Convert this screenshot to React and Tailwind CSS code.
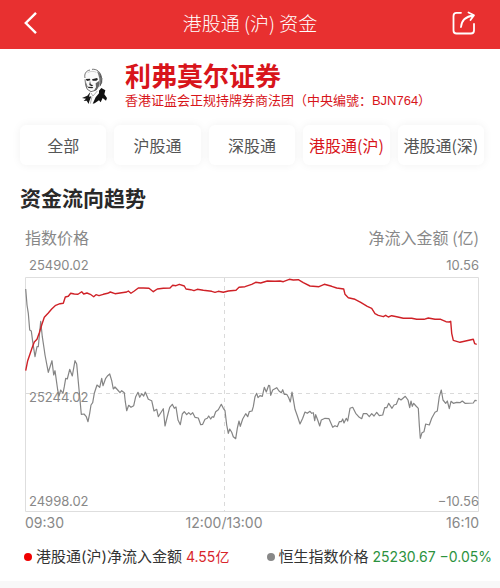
import React from "react";

const NET_INFLOW =
  "25.7,370.7 27.7,360.7 30,354 32.3,347.3 34.3,342 37,339.3 39.3,332.7 41.7,325 44.3,317.3 48.3,313 51.7,309 55.7,305.3 60,303.7 63.3,303.3 65.3,297 68.3,296.3 70.7,293.3 74.3,294 78,294.3 81.7,291.7 83.7,294 87,293 90.3,294.3 93.7,296.7 96,294.7 99,295.7 103.3,294.3 107.7,293.3 110.3,292 115,293.7 120,293 126.7,292 128.3,291 131,293.3 134.3,291 138.3,288 143.3,288 149,288.3 153.3,291.7 157.3,289 163.3,288.3 170,288 172.7,285.3 176,285.7 179.3,284.3 184.3,286 186,289 190.7,289.7 194,290.7 197.3,289.3 203.3,290.3 211.7,291.3 215,292.3 218.3,291.3 223.3,292.3 228.3,291 236,290.3 239,287.3 245,286.7 251.7,284.3 255.7,282.3 260.7,283 267.3,281 275,281.3 280,281 283.3,281.7 289.3,279.3 293.3,280 298.3,279.7 303.3,282.7 310,286 319,286.7 324.3,284.3 331.7,286.3 336.7,288 343.7,289 345,294.3 348.3,297.7 355,299.3 360.7,302.3 367.3,306.3 371.7,308.3 375,313.7 378.3,315.3 383.3,316.7 385.7,315.3 388.3,317 391.7,315.7 396.7,316.7 403.3,318.3 411.7,318.3 416.7,319.3 424,319.3 428.3,318 435,319.3 440.7,319.3 446,321.7 449.3,322 450.7,321.3 451.7,333.3 453.3,340.3 460,342.3 466.7,340.7 473.3,339.3 474.7,343.7 476.7,344.3";

const INDEX_PRICE =
  "25.7,289 27,305 28.3,313.3 29.7,330 31.3,331 32.7,341.7 35,356.7 37,346.7 38.3,346.7 40.7,321.3 42.3,336.7 44.3,350 45,355 48.3,372.3 52,360.7 53.7,375 55,370.7 57.7,390 59,396 60.7,390 63,393.3 64.3,386.7 65.7,378.3 67.3,379 69.7,369.3 72.3,376 75,360.7 76.7,364 78.3,381.7 80,400 81.3,414.3 84,414 86.3,416.7 88,421.7 89.7,413.3 91,405 92.7,402.7 94.3,393.3 97,385 99.7,387.3 101.7,378.3 103,385.7 105.7,378.3 107.7,375.7 109.7,374 111.7,380.7 113.3,389 115,387 117.7,390 120,392.7 121.7,390.7 124.3,392.7 125.3,401.7 126.7,410.7 128.7,405.3 131,407.3 133.7,405.7 135.7,396.7 138,392.3 139.7,397.3 141.7,393.7 143.7,396 145.3,392 148.3,399.3 151.7,400.7 154,411 156.7,409.3 158.3,416.7 163.3,408.7 165,426 167.7,415 169.7,407.3 172.3,404.3 174.3,408.3 176,407 178,420 180.3,424.7 182.3,414 184.3,411.7 186.7,414.7 188.7,412.7 190.7,414.7 192.7,412.7 195,417.3 198.3,418 200.7,424.7 202.7,424.3 205,419.3 207.3,418.3 208.7,416 210.7,419 212.3,416.7 213.7,417.3 215.7,411.7 218.3,409.7 221.3,404.3 223.3,408.3 225,410.7 226.7,425 228.3,433.3 229.7,429 231.7,432.3 233.3,436.7 235.7,438.7 237.3,428.3 239,421 240.3,426.3 242.7,419 245.7,413.7 247.7,416.7 249.3,411.7 252,411 253.3,406.7 255,396.7 256.7,393.3 258,397.7 260,395.7 262.3,396.3 264.3,387.3 266.3,392 268.7,385.3 269.7,385.7 270.7,395.3 272.7,390 276.7,387.7 279,391 281.3,392.7 282.7,389.7 284.3,394.3 286.7,394.3 288.7,397.7 290.3,402 292,392 293.7,401.7 295,409.3 297.3,415.7 300,424 302.7,418.3 305,412 307.3,413.3 310,411.3 311.7,413.3 313.3,412.7 314.7,420.7 315.7,414.7 317.7,420 319.7,426 321.3,420 325,418.3 329,418.7 332.7,427.3 335,425.7 337.3,426.7 339.3,421.7 341.3,421.7 342.7,419 344,423 346.3,418.3 347.7,421 350,408.3 352.7,407.3 355.7,413.3 359.3,417.3 361.7,418.7 363.3,413.7 366.7,413.7 369.3,416.7 371.7,413.7 374,416 376.7,412.3 379.3,415.7 382.7,415 384.7,407.7 386.7,407.7 388.7,403.3 392,408.3 394,405 396.3,404.3 398.7,398.3 401,400 405.3,396.3 408,400 409.7,407.7 411,401 412.3,406.3 413.7,403.3 416,406 418.3,408.3 419.3,425 420.3,438.3 422,432.7 424,431.7 425.7,424 429.3,425 431.7,418.3 435,412.3 437.3,411 439.3,396.7 441.3,390 443,400 445.7,403.3 447.3,401 449.3,408.7 451,401.3 453.3,403.3 456.7,402.3 460,402.7 462.3,401 465,403.3 473.3,403 475,400.3 476.7,400.7";

const TABS = ["全部", "沪股通", "深股通", "港股通(沪)", "港股通(深)"];

function Portrait() {
  return (
    <svg viewBox="36 36 84 114" className="h-[38px] w-7 shrink-0" role="img" aria-label="利弗莫尔">
      <path d="M49 66C45 52 52 43 64 41C82 37 98 47 98 65C100 77 96 90 87 99L78 106L62 107L52 99C47 88 50 77 49 66Z" fill="#fafafa" />
      <path d="M84 46C93 50 98 58 98 66L99 78L94 90L91 84L91 68L88 56Z" fill="#777" />
      <path d="M48 66C45 54 51 44 63 42M69 40C83 38 95 48 97 63M94 62L99 66L98 80L92 91M48 70L50 88L55 100L66 107L79 103L89 91" fill="none" stroke="#333" strokeWidth="2" />
      <path d="M56 50C64 45 74 45 82 49" fill="none" stroke="#bbb" strokeWidth="2" />
      <path d="M50 69L63 68L64 73L54 75ZM69 70L84 66L87 70L82 74L71 74ZM63 74L61 87L68 91L73 88L65 85ZM55 92L73 93L70 97L59 96Z" fill="#222" />
      <path d="M80 82L90 75L91 87L83 102L74 106L81 94ZM51 79L56 92L52 96Z" fill="#666" />
      <path d="M97 96L109 103L106 115L114 126L111 134L101 126L95 139L90 133L77 142L71 143L80 124L90 112L90 104Z" fill="#111" />
      <path d="M39 126L55 119L64 108L60 122L67 121L61 136L59 144L53 134L44 135L51 128Z" fill="#181818" />
      <path d="M66 111L72 120L85 105M69 122L64 143" fill="none" stroke="#888" strokeWidth="2" />
    </svg>
  );
}

function Legend({ dot, label, children }) {
  return (
    <div className="flex items-center whitespace-nowrap">
      <span className={`mr-1 size-2 rounded-full ${dot}`} />
      <span className="mr-1 text-[15px] text-[#333]">{label}</span>
      {children}
    </div>
  );
}

export default function App() {
  return (
    <div className="min-h-screen bg-[#f8f8f8] font-['Inter','Noto_Sans_CJK_SC',sans-serif] text-[#888]">
      <header className="flex h-[49px] items-center justify-between bg-[#e83030] px-6 text-white">
        <button type="button" aria-label="返回" className="flex w-8 items-center pb-1">
          <svg viewBox="0 0 14 24" className="h-6 w-3.5" fill="none" stroke="currentColor" strokeWidth="2.4">
            <path d="M12 1.8L1.8 12L12 22.2" />
          </svg>
        </button>
        <h1 className="pb-1 font-['Noto_Sans_CJK_SC',sans-serif] text-[19px] leading-7 font-light">港股通 (沪) 资金</h1>
        <button type="button" aria-label="分享" className="flex w-8 justify-end pb-1">
          <svg viewBox="0 0 24 24" className="size-6" fill="none" stroke="currentColor" strokeWidth="1.8" strokeLinecap="round" strokeLinejoin="round">
            <path d="M9 1.8H4.5Q1.5 1.8 1.5 5V19.5Q1.5 22.5 4.5 22.5H19Q22 22.5 22 19.5V13" />
            <path d="M9 16C9.5 10 13 5.5 21.5 4.5M16.5 1.5L22 4.2L18.5 9" />
          </svg>
        </button>
      </header>

      <main className="bg-white pb-3.5">
        <section className="flex items-center justify-center gap-4 pt-4 pl-3">
          <Portrait />
          <div className="font-['Liberation_Sans','Noto_Sans_CJK_SC',sans-serif] text-[#d8151b]">
            <p className="text-[26px] leading-6 font-bold">利弗莫尔证券</p>
            <p className="pt-1 text-[13px] leading-4 whitespace-nowrap">香港证监会正规持牌券商法团（中央编號：BJN764）</p>
          </div>
        </section>

        <nav className="grid grid-cols-5 gap-2 pt-4 pr-4 pl-5 font-['Noto_Sans_CJK_SC',sans-serif]">
          {TABS.map((tab) => (
            <button
              key={tab}
              type="button"
              className={`h-10 rounded-md bg-white text-base whitespace-nowrap shadow-[0_0_10px_rgba(0,0,0,0.06)] ${
                tab === "港股通(沪)" ? "text-[#d8151b]" : "text-[#555]"
              }`}
            >
              {tab}
            </button>
          ))}
        </nav>

        <h2 className="px-5 pt-5 text-[21px] leading-7 font-bold text-[#292929]">资金流向趋势</h2>

        <section className="pr-[21px] pl-[25px]">
          <div className="flex justify-between pt-3 font-['Noto_Sans_CJK_SC',sans-serif] text-base leading-6">
            <span>指数价格</span>
            <span>净流入金额 (亿)</span>
          </div>
          <div className="flex justify-between pt-1.5 pb-0.5 pl-1 text-[13px] leading-5">
            <span>25490.02</span>
            <span>10.56</span>
          </div>
          <div className="relative">
            <svg viewBox="25 277 454 236" preserveAspectRatio="none" className="block h-[236px] w-full" role="img" aria-label="资金流向趋势">
              <g fill="none">
                <path d="M25.5 277.5H478.5V511.5H25.5Z" stroke="#dedede" />
                <path d="M26 393.5H478M224.5 278V511" stroke="#dadada" strokeDasharray="4 4" />
                <polyline points={INDEX_PRICE} stroke="#858585" strokeWidth="1.2" strokeLinejoin="round" />
                <polyline points={NET_INFLOW} stroke="#cf2127" strokeWidth="1.4" strokeLinejoin="round" />
              </g>
            </svg>
            <span className="absolute top-1/2 left-1 -mt-2 text-[13px] leading-5">25244.02</span>
            <span className="absolute bottom-0.5 left-1 text-[13px] leading-5">24998.02</span>
            <span className="absolute right-0 bottom-0.5 text-[13px] leading-5">−10.56</span>
          </div>
          <div className="grid grid-cols-[1fr_auto_1fr] text-sm leading-5">
            <span>09:30</span>
            <span className="pr-14">12:00/13:00</span>
            <span className="text-right">16:10</span>
          </div>
        </section>

        <footer className="flex justify-between pt-3.5 pr-2 pl-6 text-sm leading-5">
          <Legend dot="bg-[#f00000]" label="港股通(沪)净流入金额">
            <span className="text-[#d8252b]">4.55亿</span>
          </Legend>
          <Legend dot="bg-[#888]" label="恒生指数价格">
            <span className="text-[#2c923e]">25230.67 −0.05%</span>
          </Legend>
        </footer>
      </main>
    </div>
  );
}
